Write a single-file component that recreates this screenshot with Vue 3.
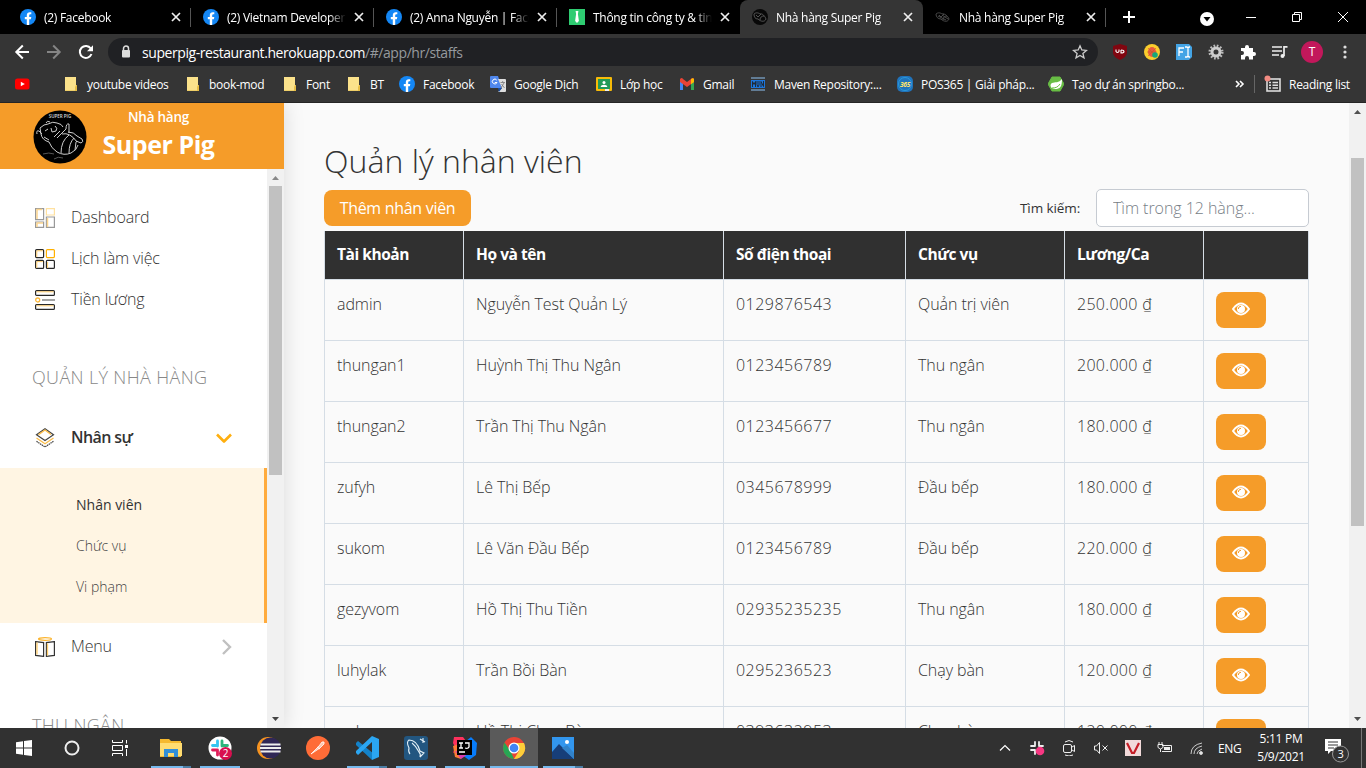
<script setup>
import { h } from 'vue'

const tabs = [
  { icon: 'fb', title: '(2) Facebook' },
  { icon: 'fb', title: '(2) Vietnam Developer' },
  { icon: 'fb', title: '(2) Anna Nguyễn | Face' },
  { icon: 'tie', title: 'Thông tin công ty & tin' },
  { icon: 'pig', title: 'Nhà hàng Super Pig', active: true },
  { icon: 'pigDim', title: 'Nhà hàng Super Pig' },
]

const bookmarks = [
  { icon: 'youtube', title: '', width: 50 },
  { icon: 'folder', title: 'youtube videos', width: 122 },
  { icon: 'folder', title: 'book-mod', width: 97 },
  { icon: 'folder', title: 'Font', width: 64 },
  { icon: 'folder', title: 'BT', width: 51 },
  { icon: 'fb', title: 'Facebook', width: 91 },
  { icon: 'translate', title: 'Google Dịch', width: 106 },
  { icon: 'classroom', title: 'Lớp học', width: 83 },
  { icon: 'gmail', title: 'Gmail', width: 71 },
  { icon: 'maven', title: 'Maven Repository:...', width: 147 },
  { icon: 'pos', title: 'POS365 | Giải pháp...', width: 151 },
  { icon: 'spring', title: 'Tạo dự án springbo...', width: 187 },
]

const columns = ['Tài khoản', 'Họ và tên', 'Số điện thoại', 'Chức vụ', 'Lương/Ca', '']
const staff = [
  ['admin', 'Nguyễn Test Quản Lý', '0129876543', 'Quản trị viên', '250.000 ₫'],
  ['thungan1', 'Huỳnh Thị Thu Ngân', '0123456789', 'Thu ngân', '200.000 ₫'],
  ['thungan2', 'Trần Thị Thu Ngân', '0123456677', 'Thu ngân', '180.000 ₫'],
  ['zufyh', 'Lê Thị Bếp', '0345678999', 'Đầu bếp', '180.000 ₫'],
  ['sukom', 'Lê Văn Đầu Bếp', '0123456789', 'Đầu bếp', '220.000 ₫'],
  ['gezyvom', 'Hồ Thị Thu Tiền', '02935235235', 'Thu ngân', '180.000 ₫'],
  ['luhylak', 'Trần Bồi Bàn', '0295236523', 'Chạy bàn', '120.000 ₫'],
  ['nobory', 'Hồ Thị Chạy Bàn', '0393632953', 'Chạy bàn', '120.000 ₫'],
]

const art = {
  fb: '<circle cx="8" cy="8" r="8" fill="#1487f5"/><path d="M6.800 16V10.300H4.800V8h2V6.300c0-2 1.200-3.100 3-3.100.8 0 1.500.1 1.500.1v2h-.9c-1 0-1.200.6-1.200 1.200V8h2.100l-.4 2.300H9.200V16z" fill="#fff"/>',
  tie: '<rect width="16" height="16" fill="#2ecc71"/><path d="M6.600 2h2.800L8.900 5l1 7L8 14l-1.900-2 1-7z" fill="#fff"/>',
  pig: '<circle cx="8" cy="8" r="8" fill="#080808"/><g fill="none" stroke="#666" stroke-width=".8"><path d="M2 5c2-2 5-1 6 0 2-1 5 2 6 5-1 3-5 3-8 0-3 0-4-2-4-5zM4 6l2 2 3-3M8 11c0-3 2-4 4-4"/></g>',
  pigDim: '<g fill="none" stroke="#4a4a4a" stroke-width="1"><path d="M1 5c2-2 5-1 6 0 2-1 6 2 7 5-1 3-5 3-8 0-3 0-5-2-5-5zM4 6l2 2 3-3M8 11c0-3 2-4 4-4M3 7l8 4M7 6l6 4"/></g>',
  youtube: '<rect x="0" y="2.500" width="14.500" height="11" rx="2.500" fill="#f00"/><path d="M5.800 5.700v4.600l4-2.300z" fill="#fff"/>',
  folder: '<path d="M0 1h11v9l1 1v4H0z" fill="#fbe28b"/><path d="M11 9h1v6h-2v-4z" fill="#e6bd46"/><path d="M0 14h10v1H0z" fill="#efcf69"/>',
  translate: '<path d="M1 0h7l4 12H1q-1 0-1-1V1q0-1 1-1z" fill="#4f87ed"/><path d="M8 3h7q1 0 1 1v11q0 1-1 1H8l4-4z" fill="#dedede"/><path d="M8 12h4l-3 4z" fill="#174ea6"/><path d="M6.800 4.200A2.400 2.400 0 1 0 7 6.500H4.800" fill="none" stroke="#fff" stroke-width="1"/><path d="M10.500 6.500H15M12.700 5v1.500M14 7l-3 5M11.500 8l3 4" fill="none" stroke="#777" stroke-width=".8"/>',
  classroom: '<rect y="1" width="16" height="14" rx="1" fill="#f8bb08"/><rect x="2" y="3" width="12" height="10" fill="#229a57"/><circle cx="8" cy="6.500" r="1.500" fill="#fff"/><path d="M4.700 11c0-3 6.600-3 6.600 0z" fill="#fff"/><path d="M9 13h4v2H9z" fill="#eee"/>',
  gmail: '<path d="M1 3v11h3V6z" fill="#4285f4"/><path d="M12 6v8h3V3z" fill="#34a853"/><path d="M1 3q2-2 3 0l4 3 4-3q2-2 3 0v3l-7 5-7-5z" fill="#ea4335"/><path d="M12 4.200v4L15 6V3q-1-1.500-3 0z" fill="#fbbc04"/>',
  maven: '<path d="M1 2h14M1 14h14" stroke="#8fc4f5" stroke-width="1"/><rect x="1" y="4" width="14" height="8" fill="#1b76dc"/><path d="M2.500 11V5.500l1.500 3 1.500-3V11M7 5v3.500L8 11l1-2V5M11 11V5.500l2.500 5V5" stroke="#202b38" fill="none"/>',
  pos: '<rect width="16" height="16" rx="5" fill="#2173bb"/><circle cx="8" cy="8" r="6.500" fill="none" stroke="#299ada"/><text x="8" y="10.500" text-anchor="middle" font-size="6.500" font-weight="700" font-style="italic" fill="#ffe46b">365</text>',
  spring: '<path d="M4 1h8l4 7-4 7H4L0 8z" fill="#68bd45" stroke="#68bd45" stroke-linejoin="round"/><path d="M14 3c0 8-2 10-7 10-4 0-6-4-3-6 3-1 7 0 10-4z" fill="#fff"/><path d="M4 12c4 0 6-1 8-4" fill="none" stroke="#68bd45"/>',
  dashboard: '<g fill="none" stroke="#999" stroke-width="1.200"><path d="M.6.6h8v11h-8zM.6 14h8v5.400h-8zM11.400 9h8v10.400h-8z"/><path d="M11.400.6h8V7h-8z" stroke="#ffe1a0"/></g><path d="M1.500 1.500H7M2 1v10M2 15v4M12.500 10v9M1.500 15H8" stroke="#fbd58f" stroke-width="1.500"/>',
  schedule: '<g fill="none" stroke="#282828" stroke-width="1.200"><rect x=".6" y=".6" width="8" height="8" rx="1"/><rect x=".6" y="11.400" width="8" height="8" rx="1"/><rect x="11.400" y="11.400" width="8" height="8" rx="1"/></g><rect x="11.400" y=".6" width="8" height="8" rx="1" fill="none" stroke="#ffb000" stroke-width="1.200"/><path d="M1.800 1.800h6M1.800 2v6M1.800 12.600h6M1.800 13v6M12.600 13v6" stroke="#ffce6e"/>',
  salary: '<g fill="none" stroke="#282828" stroke-width="1.200"><rect x=".6" y=".6" width="18.800" height="4.800" rx="1"/><rect x=".6" y="14.600" width="18.800" height="4.800" rx="1"/><path d="M7 10h13" stroke="#666"/></g><circle cx="2.700" cy="10" r="2" fill="none" stroke="#fbb83b" stroke-width="1.300"/><path d="M1.500 1.800h17M1.500 15.800h17" stroke="#ffce6e"/>',
  layers: '<g fill="none" stroke="#444" stroke-width="1.200"><path d="m1.500 6.800 8.500-6 8.500 6-8.500 5.700z"/><path d="m1.500 13.300 8.500 5.700 8.500-5.700" stroke-dasharray="1.500 .6"/></g><path d="m1.500 10 8.500 5.700L18.500 10M3.500 6.600 10 2l6 4.500" fill="none" stroke="#fbbd4a" stroke-width="1.300"/>',
  book: '<g fill="none" stroke="#333" stroke-width="1.200"><path d="m.6 4.600 8 1v13.800l-8-1zM19.400 4.600l-8 1v13.800l8-1z"/></g><ellipse cx="10" cy="2" rx="6.500" ry="1.300" fill="none" stroke="#fbb32c" stroke-width="1.200"/><path d="M2 5.500v12M12.500 6.500v12" stroke="#ffce6e" stroke-width="1.300"/>',
}

const Pic = (props) =>
  h('svg', {
    width: props.size || 16,
    height: props.size || 16,
    viewBox: `0 0 ${props.box || 16} ${props.box || 16}`,
    innerHTML: art[props.name],
  })
Pic.props = ['name', 'size', 'box']
</script>

<template>
  <div class="screen">
    <header class="chrome">
      <div class="tabstrip">
        <div v-for="(tab, i) in tabs" :key="i" class="tab" :class="{ active: tab.active, sep: ![3, 4].includes(i) }">
          <Pic :name="tab.icon" />
          <span class="tab-title">{{ tab.title }}</span>
          <svg class="close" width="10" height="10" viewBox="0 0 10 10"><path d="m1 1 8 8M9 1 1 9" /></svg>
        </div>
        <svg class="plus" width="14" height="14" viewBox="0 0 14 14"><path d="M7 1v12M1 7h12" stroke="#fff" stroke-width="2" /></svg>
        <div class="window-buttons">
          <svg width="14" height="14" viewBox="0 0 14 14"><circle cx="7" cy="7" r="7" fill="#fff" /><path d="M3.500 5h7L7 9.500z" fill="#000" /></svg>
          <svg width="10" height="10" viewBox="0 0 10 10"><path d="M0 5.500h10" stroke="#fff" /></svg>
          <svg width="10" height="10" viewBox="0 0 10 10"><path d="M.5 2.500h7v7h-7zM2.500 2.500v-2h7v7h-2" fill="none" stroke="#fff" /></svg>
          <svg width="10" height="10" viewBox="0 0 10 10"><path d="m0 0 10 10M10 0 0 10" stroke="#fff" /></svg>
        </div>
      </div>

      <div class="toolbar">
        <svg width="108" height="36" viewBox="0 0 108 36" fill="none" stroke-width="2">
          <path d="M29 18H16.500m6.300-6.500L16.300 18l6.500 6.500" stroke="#fff" />
          <path d="M47 18h12.500m-6.300-6.500 6.500 6.500-6.500 6.500" stroke="#858585" />
          <path d="M90.800 14.500A6 6 0 1 0 91.500 20" stroke="#fff" /><path d="M93 11.300v6h-6z" fill="#fff" />
        </svg>
        <div class="omnibox">
          <svg width="10" height="14" viewBox="0 0 10 14"><path d="M2.500 6V3.500a2.500 2.500 0 0 1 5 0V6" fill="none" stroke="#ddd" stroke-width="1.500" /><rect x="1" y="5" width="8" height="7.500" rx="1" fill="#ddd" /></svg>
          <span class="url">superpig-restaurant.herokuapp.com<i>/#/app/hr/staffs</i></span>
          <svg class="star" width="16" height="16" viewBox="0 0 16 16"><path d="m8 1.800 1.800 4.200 4.600.4-3.500 3 1.100 4.500L8 11.500l-4 2.400 1.100-4.500-3.500-3L6.200 6z" fill="none" stroke="#ccc" stroke-width="1.300" /></svg>
        </div>
        <div class="extensions">
          <svg width="16" height="16" viewBox="0 0 16 16"><path d="m8 0 7 2v6c0 4-3 6-7 8-4-2-7-4-7-8V2z" fill="#800610" /><path d="M4 5.500v2q1.500 2 3 0v-2M9 6v3c4 0 4-3 0-3" fill="none" stroke="#fff" stroke-width="1.100" /></svg>
          <svg width="16" height="16" viewBox="0 0 16 16"><circle cx="8" cy="8" r="8" fill="#fbcd2d" /><ellipse cx="8" cy="8" rx="4" ry="5" fill="#e85b41" /><path d="M4 4l8 8M12 4l-8 8M3 8h10" stroke="#c65a2c" stroke-width=".6" /><circle cx="11" cy="11" r="2.800" fill="#15a77a" /></svg>
          <svg width="16" height="16" viewBox="0 0 16 16"><path d="M0 0h13l3 3v10l-3 3H0z" fill="#44a4e5" /><path d="M3 12V4h5M3 8h4M9 3h2l1 1 1-1h1M12 4v8M9 13h2l1-1 1 1h1" fill="none" stroke="#fff" stroke-width="1.300" /></svg>
          <svg width="16" height="16" viewBox="0 0 16 16" fill="none"><circle cx="8" cy="8" r="6.300" stroke="#bbb" stroke-width="2.500" stroke-dasharray="1.700 1.600" /><circle cx="8" cy="8" r="4" stroke="#ccc" stroke-width="3" /></svg>
          <svg width="16" height="16" viewBox="0 0 16 16"><path d="M1 4h4V3a2 2 0 0 1 4 0v1h4v4h1a2 2 0 0 1 0 4h-1v3.500H9V14a2 2 0 0 0-4 0v1.500H1V11h1a2 2 0 0 0 0-4H1z" fill="#fff" /></svg>
          <svg width="16" height="16" viewBox="0 0 16 16"><path d="M0 3h10M0 7h10M0 11h7" stroke="#eee" stroke-width="1.700" /><circle cx="10.500" cy="12" r="2" fill="#eee" /><path d="M12 12V2.800h3.500" fill="none" stroke="#eee" stroke-width="1.700" /></svg>
        </div>
        <span class="avatar">T</span>
        <svg class="kebab" width="4" height="14" viewBox="0 0 4 14" fill="#ddd"><circle cx="2" cy="2" r="1.600" /><circle cx="2" cy="7" r="1.600" /><circle cx="2" cy="12" r="1.600" /></svg>
      </div>

      <div class="bookmarks">
        <div v-for="(b, i) in bookmarks" :key="i" class="bookmark" :class="{ narrow: b.icon === 'folder' }" :style="{ width: b.width + 'px' }">
          <Pic :name="b.icon" /><span>{{ b.title }}</span>
        </div>
        <svg width="10" height="8" viewBox="0 0 10 8"><path d="m1 1 3 3-3 3m4-6 3 3-3 3" fill="none" stroke="#fff" stroke-width="1.600" /></svg>
        <div class="reading">
          <svg width="18" height="18" viewBox="0 0 18 18"><rect x="3" y="4" width="13" height="12" fill="none" stroke="#ddd" stroke-width="1.600" /><path d="M5 7.500h2m1.500 0H14M5 10.200h2m1.500 0H14M5 13h2m1.500 0H14" stroke="#ddd" stroke-width="1.400" /><circle cx="3.500" cy="3.500" r="3" fill="#f28b82" /></svg>
          <span>Reading list</span>
        </div>
      </div>
    </header>

    <div class="page">
      <aside class="sidebar">
        <div class="brand">
          <svg class="logo" width="54" height="54" viewBox="0 0 54 54">
            <circle cx="27" cy="27" r="26.500" />
            <text x="27" y="8" font-size="4.500" font-weight="600" text-anchor="middle" fill="#ddd">SUPER PIG</text>
            <g fill="none" stroke="#ccc" stroke-width="1" stroke-linejoin="round">
              <path d="M7 18q4-4 8-4 5-3 9-1 5 1 6 4M4 24q-1-4 2-3l3 3M13 13q1-3 4-1M7 18l1 6q1 6 8 8 2 6 8 10 7 4 14 1 6-3 7-8" />
              <path d="m24 28 9-9q0-6 3-5v9M21 27l6-6M29 24q8-2 15 8M35 22q6 0 9 4l5 3q2 3-1 4l-5-2" />
              <path d="M28 43q0-12 8-18M36 43q0-10 5-15M42 40l1-8M12 21l3-2M18 18l1 4 4-1q2-3-1-5M11 27l5 3" />
              <path d="M10 44q6-2 11 0M21 49q4-3 9-1" stroke="#555" />
            </g>
          </svg>
          <div class="brand-text"><small>Nhà hàng</small><strong>Super Pig</strong></div>
        </div>
        <div class="side-body">
          <nav class="menu">
            <a class="item"><Pic name="dashboard" size="20" box="20" /><span>Dashboard</span></a>
            <a class="item"><Pic name="schedule" size="20" box="20" /><span>Lịch làm việc</span></a>
            <a class="item"><Pic name="salary" size="20" box="20" /><span>Tiền lương</span></a>
            <h2>QUẢN LÝ NHÀ HÀNG</h2>
            <a class="item current">
              <Pic name="layers" size="20" box="20" /><span>Nhân sự</span>
              <svg class="arrow" width="16" height="16" viewBox="0 0 16 16"><path d="m1 4.500 7 7 7-7" fill="none" stroke="#ffaf0f" stroke-width="2.600" stroke-linejoin="round" /></svg>
            </a>
            <div class="submenu"><a class="selected">Nhân viên</a><a>Chức vụ</a><a>Vi phạm</a></div>
            <a class="item menu-row">
              <Pic name="book" size="20" box="20" /><span>Menu</span>
              <svg class="arrow right" width="10" height="16" viewBox="0 0 10 16"><path d="m1 1 7 7-7 7" fill="none" stroke="#c0c0c0" stroke-width="2.400" /></svg>
            </a>
            <h2 class="cashier">THU NGÂN</h2>
          </nav>
          <div class="scrollbar">
            <svg width="17" height="17" viewBox="0 0 17 17"><path d="m5 11 3.500-4 3.500 4z" fill="#888" /></svg>
            <div class="thumb"></div>
            <svg class="bottom" width="17" height="17" viewBox="0 0 17 17"><path d="m5 6 3.500 4L12 6z" fill="#444" /></svg>
          </div>
        </div>
      </aside>

      <main>
        <h1>Quản lý nhân viên</h1>
        <div class="actions">
          <button class="add">Thêm nhân viên</button>
          <label>Tìm kiếm:</label>
          <input type="text" placeholder="Tìm trong 12 hàng..." />
        </div>
        <section class="table">
          <div class="row head"><div v-for="(c, i) in columns" :key="i">{{ c }}</div></div>
          <div v-for="s in staff" :key="s[0]" class="row">
            <div v-for="(v, i) in s" :key="i" :class="{ phone: i === 2, wage: i === 4 }">{{ v }}</div>
            <div>
              <button class="view">
                <svg width="18" height="14" viewBox="0 0 18 14"><path d="M1 7q8-11 16 0-8 11-16 0z" fill="none" stroke="#fff" stroke-width="2" /><circle cx="9" cy="7" r="4" fill="#fff" /><path d="M6.300 7A2.700 2.700 0 0 1 9 4.300" fill="none" stroke="#f59c29" stroke-width="1" /></svg>
              </button>
            </div>
          </div>
        </section>
      </main>
      <div class="scrollbar page-scroll">
        <svg width="17" height="17" viewBox="0 0 17 17"><path d="m5 11 3.500-4 3.500 4z" fill="#505050" /></svg>
        <div class="thumb"></div>
        <svg class="bottom" width="17" height="17" viewBox="0 0 17 17"><path d="m5 6 3.500 4L12 6z" fill="#505050" /></svg>
      </div>
    </div>

    <footer class="taskbar">
      <div class="task sys"><svg width="16" height="16" viewBox="0 0 16 16" fill="#fff"><path d="m0 2.200 7-1v6.400H0zM8 1l8-1v7.600H8zM0 8.500h7v6.300l-7-1zM8 8.500h8V16l-8-1z" /></svg></div>
      <div class="task sys"><svg width="16" height="16" viewBox="0 0 16 16"><circle cx="8" cy="8" r="6.500" fill="none" stroke="#eee" stroke-width="2" /></svg></div>
      <div class="task sys view-task"><svg width="17" height="16" viewBox="0 0 17 16" fill="none" stroke="#fff"><path d="M.5 0v2.500h10V0M.5 16v-2.500h10V16M.5 5.500h10v5H.5zM14.500 0v3.500M14.500 9v7" /><path d="M13 5h3v3h-3z" fill="#fff" stroke="none" /></svg></div>
      <div class="task stacked"><svg width="24" height="24" viewBox="0 0 24 24"><path d="M1 3h9l2 2h10v16H1z" fill="#f5b92f" /><path d="M1 7h22v13H1z" fill="#ffdc71" /><path d="M5 21v-8h14v8h-4v-4H9v4z" fill="#338fd7" /></svg></div>
      <div class="task open"><svg width="24" height="24" viewBox="0 0 24 24"><circle cx="12" cy="12" r="11.500" fill="#fff" /><g stroke-width="2.800" stroke-linecap="round"><path d="M9.500 5v5M4.500 9.500h5" stroke="#36c5f0" /><path d="M14 5v5M14.500 9.500h5" stroke="#2eb67d" /><path d="M4.500 14h5M9.500 14v5" stroke="#e01e5a" /></g><circle cx="17.500" cy="17.500" r="6.500" fill="#d80f4f" /><text x="17.500" y="21" font-size="10" text-anchor="middle" fill="#fff">2</text></svg></div>
      <div class="task"><svg width="24" height="24" viewBox="0 0 24 24"><circle cx="11" cy="12" r="11" fill="#f79420" /><circle cx="13.500" cy="12" r="10.500" fill="#302756" /><path d="M3.500 8.500h20M3 12h21M3.500 15.500h20" stroke="#eee" stroke-width="1.900" /></svg></div>
      <div class="task"><svg width="24" height="24" viewBox="0 0 24 24"><circle cx="12" cy="12" r="12" fill="#ff6c37" /><path d="m5 18 8-8 3-4q3-1 2 2l-4 4zM11 11l3 2" fill="#ffc5ae" stroke="#fff" stroke-width=".8" /></svg></div>
      <div class="task stacked"><svg width="24" height="24" viewBox="0 0 24 24"><path d="m1 7 2-2 16 13-2 6L1 9z" fill="#1382c9" /><path d="m17 0 7 3v18l-7 3V6L3 19l-2-2v-2z" fill="#2ba6f2" /></svg></div>
      <div class="task open"><svg width="24" height="24" viewBox="0 0 24 24"><rect width="24" height="24" rx="3" fill="#225680" /><path d="M6 18q-2-2-1-6-3-6 0-8 8 0 11 11l4 2-4 4q1-3-1-5-3-6-7-9M16 3l5 3M19 2v5" fill="none" stroke="#e3f0f6" stroke-width="1.100" /></svg></div>
      <div class="task open"><svg width="24" height="24" viewBox="0 0 24 24"><path d="M1 1h9l3 4-2 7-11 5 2-6-2-4z" fill="#fe315d" /><path d="m13 5 5-4 6 6-1 12-7 5-7-5z" fill="#087cfa" /><path d="m0 10 6-2 2 15-6-2z" fill="#fd7c35" /><path d="m2 15 6 8 7-5z" fill="#d73aae" /><rect x="4" y="4" width="15" height="15" fill="#000" /><path d="M6 7h4M8 7v5M6 12h4M12 7h4v4q-1 2-4 1M6 16h6" fill="none" stroke="#fff" stroke-width="1.300" /></svg></div>
      <div class="task active-task"><svg width="24" height="24" viewBox="0 0 24 24"><circle cx="12" cy="12" r="11" fill="#e94335" /><path d="M2.500 6.500 9 16l3 7A11 11 0 0 1 2.500 6.500z" fill="#27a654" /><path d="M12 7h10a11 11 0 0 1-10 16l5-8z" fill="#fdce39" /><circle cx="12" cy="12" r="5.500" fill="#fff" /><circle cx="12" cy="12" r="4.300" fill="#4285f4" /></svg></div>
      <div class="task stacked"><svg width="24" height="24" viewBox="0 0 24 24"><rect x="1" y="1" width="22" height="22" fill="#3296ee" /><path d="m1 16 7-8 15 15H1z" fill="#173e78" /><path d="m11 12 5-3 7 8v6z" fill="#3182c9" /><circle cx="16" cy="6" r="2" fill="#fff" /></svg></div>

      <div class="tray">
        <svg class="chevron" width="12" height="8" viewBox="0 0 12 8"><path d="m1 6.500 5-5 5 5" fill="none" stroke="#fff" stroke-width="1.200" /></svg>
        <svg width="16" height="16" viewBox="0 0 16 16"><path d="M6 2v4M2 6h4M10 2v4M10 6h4M2 10h4M6 10v4" stroke="#eee" stroke-width="1.800" stroke-linecap="round" /><circle cx="11" cy="11" r="4.300" fill="#f73782" /></svg>
        <svg width="16" height="16" viewBox="0 0 16 16" fill="none" stroke="#eee"><rect x="2.500" y="4.500" width="8" height="8" rx="1.500" /><path d="m11 7 2.500-1.500v6L11 10M4 2q4-3 8 0M4 15q4 2 8 0" /></svg>
        <svg width="16" height="16" viewBox="0 0 16 16" fill="none" stroke="#eee"><path d="M1.500 6h2l3-3.500v11l-3-3.500h-2zM9.500 5.500l5 5M14.500 5.500l-5 5" /></svg>
        <svg width="16" height="16" viewBox="0 0 16 16"><rect width="16" height="16" fill="#f2dada" /><path d="m2 3 5 10h2l5-10" fill="none" stroke="#c51d26" stroke-width="2.200" /></svg>
        <svg width="16" height="16" viewBox="0 0 16 16" fill="none" stroke="#eee"><path d="M5 5.500h9.500v6H5M1 4.500h5v3q-2.500 3-5 0zM2 2v2M5 2v2M3.500 9v3" /><path d="M7 7h6v3H7z" fill="#eee" stroke="none" /></svg>
        <svg width="16" height="16" viewBox="0 0 16 16" fill="none" stroke="#ccc"><path d="M2 14Q2 5 13 3M5 14q0-6 8-8M8 14q0-3 5-5" /><circle cx="12" cy="13" r="1.500" fill="#eee" /></svg>
        <span class="lang">ENG</span>
        <div class="clock"><span>5:11 PM</span><span>5/9/2021</span></div>
        <svg class="notice" width="26" height="26" viewBox="0 0 26 26"><path d="M1 2h16v12H7l-3 3v-3H1z" fill="#fff" /><path d="M4 5h10M4 8h10M4 11h6" stroke="#333" /><circle cx="16.500" cy="17" r="8" fill="#333" stroke="#999" /><text x="16.500" y="21" font-size="11" text-anchor="middle" fill="#fff">3</text></svg>
        <span class="desktop-edge"></span>
      </div>
    </footer>
  </div>
</template>

<style>
body { margin: 0; overflow: hidden; }
</style>
<style scoped>
* { box-sizing: border-box; }
.screen { width: 1366px; height: 768px; overflow: hidden; display: flex; flex-direction: column; font-family: "Open Sans", "Noto Sans", sans-serif; }
.screen :deep(svg) { display: block; flex: none; }
.chrome { height: 103px; background: #353535; color: #fff; font-size: 12px; letter-spacing: -.2px; border-bottom: 1px solid #252525; flex: none; }
.tabstrip { height: 34px; padding-left: 8px; background: #000; display: flex; align-items: center; }
.tab { width: 183px; height: 34px; padding-left: 12px; display: flex; align-items: center; border-right: 1px solid transparent; position: relative; flex: none; }
.tab.sep::after { content: ""; position: absolute; right: -1px; top: 8px; width: 1px; height: 19px; background: #555; }
.tab.active { background: #353535; border-radius: 8px 8px 0 0; }
.tab-title { width: 120px; margin-left: 8px; overflow: hidden; white-space: nowrap; letter-spacing: -.28px; mask-image: linear-gradient(90deg, #000 102px, transparent 119px); }
.close { margin-left: 7px; stroke: #eee; stroke-width: 1.7; }
.plus { margin-left: 16px; }
.window-buttons { display: flex; align-items: center; margin-left: auto; padding-right: 18px; gap: 36px; height: 28px; }
.window-buttons svg:first-child { margin: 4px -4px 0 0; }
.toolbar { height: 36px; display: flex; align-items: center; }
.omnibox { width: 990px; height: 28px; border-radius: 14px; background: #202124; display: flex; align-items: center; padding: 0 10px 0 13px; }
.url { margin-left: 11px; font-size: 14px; letter-spacing: -.43px; white-space: nowrap; }
.url i { color: #969a9e; font-style: normal; }
.star { margin-left: auto; }
.extensions { display: flex; gap: 16px; margin-left: 14px; }
.avatar { width: 22px; height: 22px; margin-left: 13px; border-radius: 50%; background: #c2185b; text-align: center; line-height: 22px; }
.kebab { margin-left: 20px; }
.bookmarks { height: 28px; padding-left: 16px; display: flex; align-items: center; letter-spacing: -.28px; }
.bookmark:first-child { margin-left: -1px; padding-right: 1px; }
.bookmark { display: flex; align-items: center; gap: 8px; white-space: nowrap; flex: none; }
.bookmark.narrow { gap: 6px; }
.reading { height: 18px; margin-left: 9px; padding-left: 9px; display: flex; align-items: center; gap: 7px; border-left: 1px solid #666; white-space: nowrap; }
.page { height: 625px; display: flex; background: #fafafa; overflow: hidden; flex: none; }
.sidebar { width: 284px; background: #fff; box-shadow: 0 0 20px #0002; z-index: 1; flex: none; }
.brand { height: 66px; display: flex; padding: 7px 0 0 33px; background: #f59c29; color: #fff; }
.brand-text { width: 113px; margin-left: 15px; display: flex; flex-direction: column; align-items: center; }
small { font-size: 13.500px; font-weight: 600; line-height: 15px; letter-spacing: -.25px; }
strong { font-size: 25px; line-height: 32px; margin-top: 3px; letter-spacing: -.45px; white-space: nowrap; }
.side-body { height: 559px; display: flex; }
.menu { width: 267px; padding-top: 28px; color: #333; font-size: 16px; font-weight: 300; }
.item { height: 41px; padding-left: 35px; display: flex; align-items: center; }
.item span { margin-left: 16px; line-height: 22px; margin-top: -2px; letter-spacing: -.15px; }
h2 { margin: 33px 0 0 32px; height: 55px; font-size: 18px; line-height: 48px; font-weight: 300; color: #888; letter-spacing: .35px; white-space: nowrap; }
.current { height: 60px; }
.item.current span { font-weight: 600; letter-spacing: -.6px; }
.arrow { margin-left: auto; margin-right: 35px; }
.submenu { height: 155px; padding: 16px 0 0 76px; background: #fff5e3; border-right: 3px solid #ffab3d; font-size: 14px; letter-spacing: 0; }
.submenu a { display: block; height: 41px; line-height: 41px; color: #444; }
.submenu .selected { font-weight: 500; color: #333; }
.menu-row { height: 48px; }
.cashier { margin-top: 30px; }
.scrollbar { width: 17px; height: 100%; display: flex; flex-direction: column; align-items: center; background: #f1f1f1; flex: none; }
.thumb { width: 13px; height: 289px; background: #c1c1c1; }
.bottom { margin-top: auto; }
main { width: 1025px; padding: 40px 0 0 40px; color: #333; font-weight: 300; flex: none; }
h1 { margin: 0; height: 46px; line-height: 35px; font-size: 32px; font-weight: 300; letter-spacing: .03px; white-space: nowrap; }
.actions { height: 38px; display: flex; align-items: center; }
button { border: 0; background: #f59c29; color: #fff; border-radius: 8px; padding: 0; }
.add { width: 147px; height: 36px; padding-bottom: 1px; font: 500 16px "Open Sans", sans-serif; letter-spacing: -.3px; }
label { margin-left: auto; width: 76px; font-size: 13.500px; letter-spacing: -.1px; font-weight: 400; }
input { width: 213px; height: 38px; padding: 0 16px 1px; border: 1px solid #c6cbd2; border-radius: 5px; background: #fff; font: 300 16px "Open Sans", sans-serif; letter-spacing: -.05px; }
input::placeholder { color: #777e86; opacity: 1; }
.table { width: 985px; margin-top: 4px; border-right: 1px solid #d5dde5; }
.row { height: 61px; display: grid; grid-template-columns: 139px 260px 182px 159px 139px 105px; border-bottom: 1px solid #d5dde5; font-size: 16px; letter-spacing: -.07px; line-height: 24px; white-space: nowrap; }
.row > div { border-left: 1px solid #d5dde5; padding: 12px; }
.phone { letter-spacing: .48px; }
.wage { letter-spacing: .3px; }
.row.head { height: 49px; background: #303030; color: #fff; font-weight: 700; font-size: 15.500px; letter-spacing: -.45px; }
.row.head > div { padding-top: 11px; }
.view { width: 50px; height: 36px; padding-bottom: 2px; display: flex; align-items: center; justify-content: center; }
.page-scroll { margin-left: auto; }
.page-scroll .thumb { height: 368px; margin-top: 38px; }
.taskbar { height: 40px; background: #313131; display: flex; color: #fff; }
.task { width: 40px; height: 40px; margin-right: 9px; display: flex; align-items: center; justify-content: center; border-bottom: 2px solid transparent; padding-top: 2px; flex: none; }
.sys { width: 48px; margin-right: 0; }
.view-task { margin-right: 7px; }
.open { border-color: #76b9ed; }
.stacked { border-image: linear-gradient(90deg, #76b9ed 31px, #4b7da4 31px) 2; }
.active-task { width: 48px; margin: 0 5px; background: #5a5a5a; border-color: #76b9ed; }
.task:has(+ .active-task) { margin-right: 0; }
.tray { margin-left: auto; display: flex; align-items: center; gap: 16px; font-size: 12px; letter-spacing: -.3px; }
.chevron { margin-right: 2px; }
.lang { margin-left: -3px; width: 25px; }
.clock { width: 54px; margin-left: -5px; display: flex; flex-direction: column; align-items: center; line-height: 18px; white-space: nowrap; }
.notice { margin-top: 4px; }
.desktop-edge { width: 1px; height: 40px; margin: 0 4px 0 -5px; background: #777; }
</style>
